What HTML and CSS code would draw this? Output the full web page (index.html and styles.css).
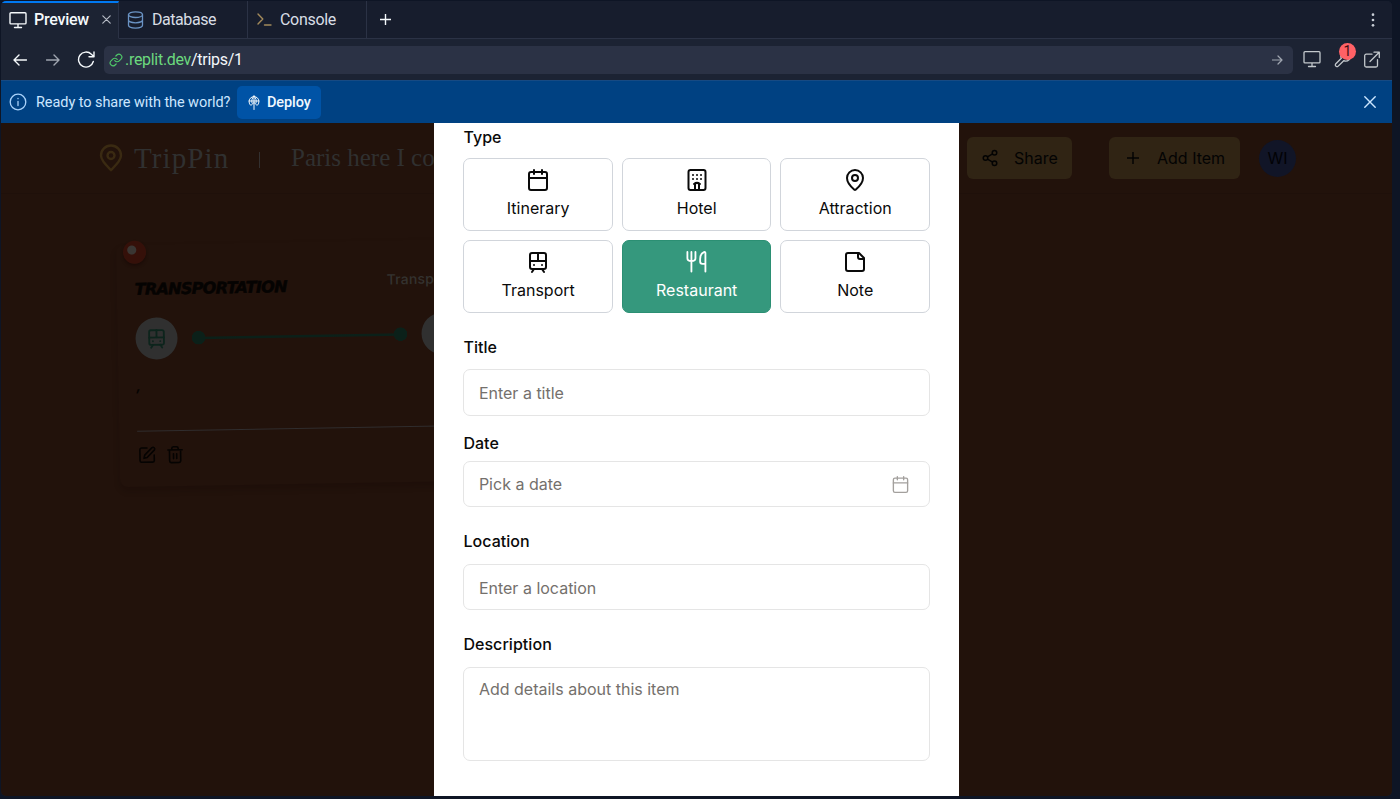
FILE: index.html
```html
<!DOCTYPE html>
<html lang="en">
<head>
<meta charset="utf-8">
<title>Preview</title>
<link rel="stylesheet" href="styles.css">
</head>
<body>
<div class="window">
  <nav class="tabs">
    <div class="tab tab-active">
      <svg class="ic" width="18" height="18" viewBox="0 0 18 18"><path d="M2 1.7h14a1 1 0 0 1 1 1v9.2a1 1 0 0 1-1 1H2a1 1 0 0 1-1-1V2.700a1 1 0 0 1 1-1zM9 13v3.500M5.500 16.500h7"/></svg>
      <span class="tab-name t-preview">Preview</span>
      <svg class="ic close" width="9" height="9" viewBox="0 0 9 9"><path d="M.8.8l7.400 7.400M8.200.8L.8 8.200"/></svg>
    </div>
    <div class="tab tab-db">
      <svg class="ic db" width="17" height="18" viewBox="0 0 17 18"><ellipse cx="8.500" cy="3.700" rx="7" ry="2.800"/><path d="M1.500 3.700v10.600c0 1.500 3.100 2.800 7 2.800s7-1.300 7-2.800V3.700M1.500 9c0 1.500 3.100 2.800 7 2.800s7-1.300 7-2.800"/></svg>
      <span class="tab-name t-database">Database</span>
    </div>
    <div class="tab tab-console">
      <svg class="ic console" width="15" height="13" viewBox="0 0 15 13"><path d="M1 1l4.800 5L1 11M7.500 12h6.500"/></svg>
      <span class="tab-name t-console">Console</span>
    </div>
    <div class="tab-rest">
      <svg class="ic" width="11" height="11" viewBox="0 0 11 11"><path d="M5.500 0v11M0 5.500h11"/></svg>
      <svg width="4" height="16" viewBox="0 0 4 16" fill="#c9ced6"><circle cx="2" cy="2.700" r="1.350"/><circle cx="2" cy="8" r="1.350"/><circle cx="2" cy="13.300" r="1.350"/></svg>
    </div>
  </nav>

  <div class="toolbar">
    <svg class="ic back" width="14" height="12" viewBox="0 0 14 12"><path d="M13.500 6H1M6 1L1 6l5 5"/></svg>
    <svg class="ic forward" width="14" height="12" viewBox="0 0 14 12"><path d="M.5 6H13M8 1l5 5-5 5"/></svg>
    <svg class="ic reload" width="18" height="17" viewBox="0 0 18 17"><path d="M16.300 10.500A7.500 7.500 0 1 1 14.400 3.300L17 5.700M17 1v4.800h-5"/></svg>
    <div class="address">
      <svg class="ic link" width="14" height="14" viewBox="0 0 24 24"><path d="M10 13a5 5 0 0 0 7.540.54l3-3a5 5 0 0 0-7.070-7.070l-1.720 1.710"/><path d="M14 11a5 5 0 0 0-7.540-.54l-3 3a5 5 0 0 0 7.070 7.070l1.710-1.710"/></svg>
      <span class="url"><span class="host">.replit.dev</span>/trips/1</span>
      <svg class="ic go" width="11" height="10" viewBox="0 0 11 10"><path d="M.5 5h9.500M6 1l4 4-4 4"/></svg>
    </div>
    <svg class="ic tool screen" width="18" height="18" viewBox="0 0 18 18"><path d="M2 1.700h14a1 1 0 0 1 1 1v9.200a1 1 0 0 1-1 1H2a1 1 0 0 1-1-1V2.700a1 1 0 0 1 1-1zM9 13v3.500M5.500 16.500h7"/></svg>
    <div class="wrench">
      <svg class="ic tool" width="19" height="19" viewBox="0 0 24 24"><path d="M14.700 6.300a1 1 0 0 0 0 1.400l1.600 1.600a1 1 0 0 0 1.400 0l3.770-3.770a6 6 0 0 1-7.940 7.940l-6.910 6.910a2.120 2.120 0 0 1-3-3l6.910-6.910a6 6 0 0 1 7.940-7.940l-3.760 3.760z"/></svg>
      <span class="badge">1</span>
    </div>
    <svg class="ic tool" width="16" height="17" viewBox="0 0 16 17"><path d="M8 3.200H2.200A1.500 1.500 0 0 0 .7 4.700v9.800A1.500 1.500 0 0 0 2.200 16H12a1.500 1.500 0 0 0 1.500-1.500V8.700M6 10.500L15 1.500M10 1.200h5.300v5.300"/></svg>
  </div>

  <div class="banner">
    <svg class="ic info" width="18" height="18" viewBox="0 0 18 18"><circle cx="9" cy="9" r="7.800"/><path d="M9 8.300v4.200M9 5.300v.4"/></svg>
    <span class="ready">Ready to share with the world?</span>
    <div class="deploy">
      <svg class="ic" width="12" height="15" viewBox="0 0 12 15"><path d="M2.600 10.300a5 5 0 1 1 6.800 0M1.100 6h9.800M6 1c-2.200 2.200-2.700 5-2 7M6 1c2.200 2.200 2.700 5 2 7M6 1v13.500M3.500 9.800L6 7.500l2.500 2.300"/></svg>
      <span>Deploy</span>
    </div>
    <svg class="ic dismiss" width="12" height="12" viewBox="0 0 12 12"><path d="M.8.8l10.400 10.400M11.200.8L.8 11.200"/></svg>
  </div>

  <main class="stage">
    <header class="site-head">
      <svg class="pin" width="24" height="28" viewBox="0 0 24 28"><path d="M12 26C9 23 2 17 2 11.500a10 10 0 0 1 20 0C22 17 15 23 12 26z"/><circle cx="12" cy="11.500" r="3.500"/></svg>
      <span class="brand">TripPin</span>
      <span class="bar"></span>
      <span class="trip">Paris here I come</span>
      <div class="btn share">
        <svg width="18" height="18" viewBox="0 0 24 24"><circle cx="18" cy="5" r="3"/><circle cx="6" cy="12" r="3"/><circle cx="18" cy="19" r="3"/><path d="M8.590 13.510l6.830 3.980M15.410 6.510l-6.820 3.980"/></svg>
        <span>Share</span>
      </div>
      <div class="btn add">
        <svg width="14" height="14" viewBox="0 0 14 14"><path d="M7 1v12M1 7h12"/></svg>
        <span>Add Item</span>
      </div>
      <div class="avatar">WI</div>
    </header>

    <section class="note-card">
      <div class="pushpin"></div>
      <div class="card-head"><h2>TRANSPORTATION</h2><span class="kind">Transport</span></div>
      <div class="route">
        <div class="stop"><svg width="22" height="22" viewBox="0 0 24 24"><rect x="4" y="3" width="16" height="16" rx="2"/><path d="M4 11h16M12 3v8M8 19l-2 3M18 22l-2-3M8 15h.01M16 15h.01"/></svg></div>
        <div class="line"></div>
        <div class="stop"></div>
      </div>
      <div class="comma">,</div>
      <div class="card-actions">
        <svg width="19" height="19" viewBox="0 0 24 24"><path d="M12 3H5a2 2 0 0 0-2 2v14a2 2 0 0 0 2 2h14a2 2 0 0 0 2-2v-7"/><path d="M18.400 2.600a2.170 2.170 0 0 1 3 3L12 15l-4 1 1-4z"/></svg>
        <svg width="19" height="19" viewBox="0 0 24 24"><path d="M3 6h18M19 6v14a2 2 0 0 1-2 2H7a2 2 0 0 1-2-2V6M8 6V4a2 2 0 0 1 2-2h4a2 2 0 0 1 2 2v2M10 11v6M14 11v6"/></svg>
      </div>
    </section>

    <form class="modal">
      <label>Type</label>
      <div class="types">
        <div class="type"><svg width="24" height="24" viewBox="0 0 24 24"><path d="M8 2v4M16 2v4M3 10h18"/><rect x="3" y="4" width="18" height="18" rx="2"/></svg><span>Itinerary</span></div>
        <div class="type"><svg width="24" height="24" viewBox="0 0 24 24"><rect x="3.500" y="2" width="17" height="20" rx="2"/><path d="M10 22v-6.570M14 15.430V22M15 16a5 5 0 0 0-6 0M8 7h.01M12 7h.01M16 7h.01M8 11h.01M12 11h.01M16 11h.01"/></svg><span>Hotel</span></div>
        <div class="type"><svg width="24" height="24" viewBox="0 0 24 24"><path d="M20 10c0 4.990-5.540 10.190-7.400 11.800a1 1 0 0 1-1.200 0C9.540 20.190 4 14.990 4 10a8 8 0 0 1 16 0"/><circle cx="12" cy="10" r="3"/></svg><span>Attraction</span></div>
        <div class="type"><svg width="24" height="24" viewBox="0 0 24 24"><rect x="4" y="3" width="16" height="16" rx="2"/><path d="M4 11h16M12 3v8M8 19l-2 3M18 22l-2-3M8 15h.01M16 15h.01"/></svg><span>Transport</span></div>
        <div class="type selected"><svg width="24" height="24" viewBox="0 0 24 24"><path d="M2.500 2v6.500c0 2 1.500 3 4.200 3s4.200-1 4.200-3V2M6.700 2v20.500M21.300 22.500V3c0-.8-.7-1.100-1.500-.8-2.800 1-4 3.800-4 7.300V12c0 1.500.8 2.500 2.300 2.500h3.200"/></svg><span>Restaurant</span></div>
        <div class="type"><svg width="24" height="24" viewBox="0 0 24 24"><path d="M16 3H5a2 2 0 0 0-2 2v14a2 2 0 0 0 2 2h14a2 2 0 0 0 2-2V8Z"/><path d="M15 3v4a2 2 0 0 0 2 2h4"/></svg><span>Note</span></div>
      </div>
      <label class="l-title">Title</label>
      <div class="field">Enter a title</div>
      <label class="l-date">Date</label>
      <div class="field date">Pick a date
        <svg width="19" height="19" viewBox="0 0 24 24"><path d="M8 2v4M16 2v4M3 10h18"/><rect x="3" y="4" width="18" height="18" rx="2"/></svg>
      </div>
      <label class="l-location">Location</label>
      <div class="field">Enter a location</div>
      <label class="l-desc">Description</label>
      <div class="field area">Add details about this item</div>
    </form>
  </main>
</div>
</body>
</html>
```

FILE: styles.css
```css
* { box-sizing: border-box; }
body { margin: 0; height: 799px; overflow: hidden; padding: 1px 8.500px 3px 1px; background: #0e1525; font-family: Inter, "Liberation Sans", sans-serif; }
svg { display: block; flex: none; }
.ic { fill: none; stroke: #f5f9fc; stroke-width: 1.4; stroke-linecap: round; stroke-linejoin: round; }
.window { height: 795px; display: flex; flex-direction: column; border-radius: 5px; overflow: hidden; background: #1c2333; }

/* tab strip */
.tabs, .toolbar, .banner { font-family: Roboto, "Noto Sans", sans-serif; flex: none; display: flex; }
.tabs { height: 38px; background: #171d2d; color: #d9dde5; font-size: 16px; }
.tab { display: flex; align-items: center; border-right: 1px solid #2b3245; border-bottom: 1px solid #2b3245; }
.tab-active { width: 118px; padding: 0 7px 2px 8px; background: #1c2333; border-bottom-color: #1c2333; border-top: 2px solid #0079f2; color: #f5f9fc; font-weight: 500; }
.tab-active .tab-name { margin-left: 7px; margin-right: auto; }
.tab .close { stroke: #b5bac4; stroke-width: 1.2; }
.tab-db { width: 129px; padding-left: 8px; gap: 8px; }
.tab-console { width: 119px; padding-left: 9px; gap: 8px; }
.db { stroke: #6a93c4; stroke-width: 1.300; }
.console { stroke: #a38a5b; }
.t-preview { letter-spacing: -.25px; }
.t-database { letter-spacing: -.45px; }
.t-console { letter-spacing: -.3px; }
.tab-rest { flex: 1; display: flex; align-items: center; justify-content: space-between; padding: 0 17px 0 13px; border-bottom: 1px solid #2b3245; }

/* address bar */
.toolbar { height: 41px; align-items: center; padding: 0 11.500px 0 12px; }
.forward { margin-left: 19px; stroke: #9fa5b0; }
.reload { margin-left: 17px; }
.address { flex: 1; height: 28px; margin: 0 10px 0 9px; padding: 0 10px 0 5px; background: #2b3245; border-radius: 5px; display: flex; align-items: center; font-size: 16px; color: #f5f9fc; }
.link { stroke: #4fc769; stroke-width: 2; }
.url { margin-left: 2px; letter-spacing: -.3px; }
.host { color: #6cd97e; }
.go { margin-left: auto; stroke: #9fa5b0; stroke-width: 1.2; }
.tool { stroke: #c2c8cc; stroke-width: 1.3; }
.screen { margin-top: -1px; }
.wrench { position: relative; width: 19px; margin: 0 12px; }
.wrench .tool { stroke-width: 1.7; }
.badge { position: absolute; left: 6px; top: -7px; width: 17px; height: 17px; border-radius: 50%; background: #ff6166; color: #3d0e12; font-size: 14px; line-height: 17px; text-align: center; }

/* deploy banner */
.banner { height: 43px; align-items: center; background: #004182; border-top: 1px solid #174a83; padding: 0 15.500px 0 8px; color: #cce6ff; font-size: 14.500px; }
.info { margin-left: -.5px; stroke: #a9d2fa; stroke-width: 1.300; }
.ready { margin-left: 9.500px; width: 194px; white-space: nowrap; letter-spacing: -.07px; }
.deploy { height: 33px; width: 84px; margin-left: 7px; padding-left: 11px; background: #0053a6; border-radius: 5px; display: flex; align-items: center; gap: 7px; color: #f0f8ff; font-weight: 500; letter-spacing: -.1px; }
.deploy .ic { stroke-width: 1; }
.dismiss { margin-left: auto; stroke: #cce6ff; }

/* dimmed page */
.stage { position: relative; flex: 1; overflow: hidden; background: #22120b; }
.site-head { height: 71px; padding-left: 98px; display: flex; align-items: center; border-bottom: 1px solid #1f100a; color: #303030; font-family: Georgia, "Liberation Serif", serif; }
.pin { fill: none; stroke: #3a2a12; stroke-width: 2.400; }
.brand { width: 97px; margin-left: 11px; font-size: 29px; letter-spacing: 1.100px; }
.bar { width: 1px; height: 16px; margin: 3px 0 0 28px; background: #333030; }
.trip { width: 200px; margin-left: 31px; font-size: 25px; white-space: nowrap; }
.btn { height: 42px; display: flex; align-items: center; background: #302414; border-radius: 6px; color: #030303; font: 16px Inter, sans-serif; }
.btn svg { fill: none; stroke: #030303; stroke-width: 2; }
.add svg { stroke-width: 1.500; }
.share { width: 105px; margin-left: 476px; padding-left: 14px; gap: 15px; }
.add { width: 131px; margin-left: 37px; padding-left: 17px; gap: 17px; }
.avatar { width: 37px; height: 37px; margin-left: 19px; border-radius: 50%; background: #111527; color: #020205; font: 16px/37px Inter, sans-serif; text-align: center; }

.note-card { position: relative; width: 470px; height: 242px; margin: 47px 0 0 117px; padding: 23px 18px; border-radius: 8px; transform: rotate(-1deg); box-shadow: 0 4px 6px rgba(15, 6, 3, .2); color: #050302; }
.pushpin { position: absolute; left: 7px; top: -4px; width: 23px; height: 23px; border-radius: 50%; background: radial-gradient(circle at 38% 40%, #3a3633 0 4px, #351009 5px); box-shadow: 0 2px 3px #1b0b07; }
.card-head { display: flex; justify-content: space-between; height: 38px; }
h2 { margin: 10px 0 0; font: italic bold 16px/24px "DejaVu Sans", sans-serif; letter-spacing: -.7px; -webkit-text-stroke: .5px #050302; }
.kind { margin-top: 6px; width: 182px; color: #343230; font-weight: 500; font-size: 14px; line-height: 20px; letter-spacing: .2px; }
.route { display: flex; align-items: center; margin-top: 12px; }
.stop { width: 42px; height: 42px; border-radius: 50%; background: #303030; display: flex; align-items: center; justify-content: center; flex: none; }
.stop svg { fill: none; stroke: #0d241c; stroke-width: 2; stroke-linecap: round; }
.line { width: 216px; height: 14px; margin: 0 14px; background: radial-gradient(circle at 7px 7px, #0b2019 6.500px, transparent 7px), radial-gradient(circle at 209px 7px, #0b2019 6.500px, transparent 7px), linear-gradient(#0b2019, #0b2019) 7px 6px / 202px 2.500px no-repeat; }
.comma { height: 71px; padding-top: 16px; line-height: 20px; font-style: italic; font-size: 14px; font-weight: 700; }
.card-actions { display: flex; gap: 9px; padding: 14px 0 0; border-top: 1.500px solid #302d2e; }
.card-actions svg { fill: none; stroke: #050302; stroke-width: 2; stroke-linecap: round; stroke-linejoin: round; }

/* item dialog */
.modal { position: absolute; left: 433px; top: 0; bottom: 0; width: 525px; padding: 4px 29px 4px 29.400px; background: #fff; color: #0a0a0a; font-size: 16px; }
label { display: block; line-height: 20px; font-weight: 500; letter-spacing: .05px; }
.types { display: grid; grid-template-columns: repeat(3, 1fr); gap: 9px; margin-top: 11px; margin-bottom: 24px; }
.type { height: 73px; border: 1px solid #d1d5db; border-radius: 7px; display: flex; flex-direction: column; align-items: center; padding-top: 9px; gap: 5px; line-height: 22px; }
.type svg { fill: none; stroke: currentColor; stroke-width: 2; stroke-linecap: round; stroke-linejoin: round; }
.selected { background: #35987d; border-color: #2b8f73; color: #fff; }
.type.selected svg { width: 23px; height: 23px; margin-bottom: 1px; stroke-width: 1.900; }
.field { height: 47px; margin-top: 12px; border: 1px solid #e5e5e5; border-radius: 7px; padding: 0 14.500px; line-height: 46px; color: #74706c; }
.l-date { margin-top: 17px; }
.date { height: 46px; margin-top: 8px; line-height: 44px; display: flex; align-items: center; justify-content: space-between; padding-right: 19px; }
.date svg { fill: none; stroke: #a3a09d; stroke-width: 1.700; stroke-linecap: round; }
.l-location { margin-top: 24px; }
.l-location + .field { margin-top: 13px; height: 46px; }
.l-desc { margin-top: 24px; }
.l-desc + .area { height: 94px; margin-top: 13px; line-height: 24px; padding-top: 9px; }
```
